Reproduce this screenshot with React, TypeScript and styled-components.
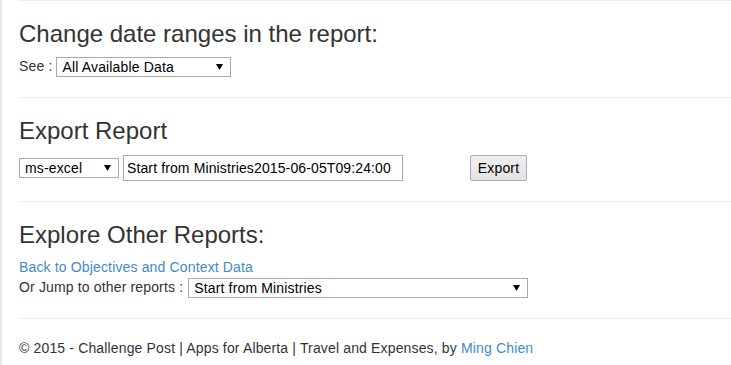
import React from "react";
import styled, { createGlobalStyle } from "styled-components";

const GlobalStyle = createGlobalStyle`
  html, body {
    margin: 0;
    padding: 0;
    background: #fff;
  }
  body {
    font-family: "Liberation Sans", Arial, Helvetica, sans-serif;
    font-size: 14px;
    line-height: 1.42857;
    letter-spacing: 0.15px;
    color: #333;
  }
`;

const Page = styled.div`
  border-left: 2px solid #e6e6e6;
  padding-left: 17px;
  min-height: 365px;
  box-sizing: border-box;
  overflow: hidden;
`;

const Rule = styled.hr`
  margin: 20px 0;
  border: 0;
  border-top: 1px solid #eee;
  &:first-child {
    margin-top: 0;
  }
`;

const Heading = styled.h3`
  margin: 20px 0 10px;
  font-size: 24px;
  font-weight: 500;
  line-height: 1.1;
  letter-spacing: 0;
  color: #333;
`;

const Row = styled.div`
  display: flex;
  align-items: center;
  white-space: pre;
`;

const SelectWrap = styled.span<{ $width: number; $offset?: number }>`
  position: relative;
  display: inline-block;
  margin-left: ${({ $offset }) => $offset ?? 0}px;
  width: ${({ $width }) => $width}px;
  height: 20px;
`;

const NativeSelect = styled.select`
  appearance: none;
  -webkit-appearance: none;
  width: 100%;
  height: 100%;
  box-sizing: border-box;
  margin: 0;
  padding: 0 16px 0 5px;
  border: 1px solid #a9a9a9;
  border-radius: 0;
  background: #fff;
  font-family: "Liberation Sans", Arial, sans-serif;
  font-size: 14px;
  letter-spacing: 0.15px;
  color: #000;
  outline: none;
`;

const Arrow = styled.svg`
  position: absolute;
  right: 8px;
  top: 7px;
  width: 7px;
  height: 6px;
  pointer-events: none;
`;

const TextBox = styled.input`
  width: 280px;
  height: 26px;
  box-sizing: border-box;
  margin: 0 0 0 4px;
  padding: 0 3px;
  border: 1px solid #a9a9a9;
  font-family: "Liberation Sans", Arial, sans-serif;
  font-size: 14px;
  letter-spacing: 0.12px;
  color: #000;
  outline: none;
`;

const Button = styled.button`
  margin-left: 67px;
  width: 57px;
  height: 26px;
  box-sizing: border-box;
  padding: 0;
  border: 1px solid #acacac;
  border-radius: 2px;
  background: linear-gradient(#f0f0f0, #e3e3e3);
  font-family: "Liberation Sans", Arial, sans-serif;
  font-size: 14px;
  letter-spacing: 0.15px;
  color: #000;
`;

const Link = styled.a`
  color: #428bca;
  text-decoration: none;
`;

const Line = styled.div`
  height: 20px;
`;

const Footer = styled.p`
  margin: 0;
`;

const Select = ({
  width,
  value,
  offset,
}: {
  width: number;
  value: string;
  offset?: number;
}) => (
  <SelectWrap $width={width} $offset={offset}>
    <NativeSelect defaultValue={value}>
      <option>{value}</option>
    </NativeSelect>
    <Arrow viewBox="0 0 7 6">
      <path d="M0 0H7L3.5 6Z" fill="#000" />
    </Arrow>
  </SelectWrap>
);

export default function App() {
  return (
    <Page>
      <GlobalStyle />
      <Rule />
      <Heading>Change date ranges in the report:</Heading>
      <Row>
        {"See : "}
        <Select width={175} value="All Available Data" />
      </Row>
      <Rule />
      <Heading>Export Report</Heading>
      <Row>
        <Select width={100} value="ms-excel" />
        <TextBox defaultValue="Start from Ministries2015-06-05T09:24:00" />
        <Button>Export</Button>
      </Row>
      <Rule />
      <Heading>Explore Other Reports:</Heading>
      <Line>
        <Link href="#">Back to Objectives and Context Data</Link>
      </Line>
      <Row>
        {"Or Jump to other reports : "}
        <Select width={340} offset={1} value="Start from Ministries" />
      </Row>
      <Rule />
      <Footer>
        © 2015 - Challenge Post | Apps for Alberta | Travel and Expenses, by{" "}
        <Link href="#">Ming Chien</Link>
      </Footer>
    </Page>
  );
}
